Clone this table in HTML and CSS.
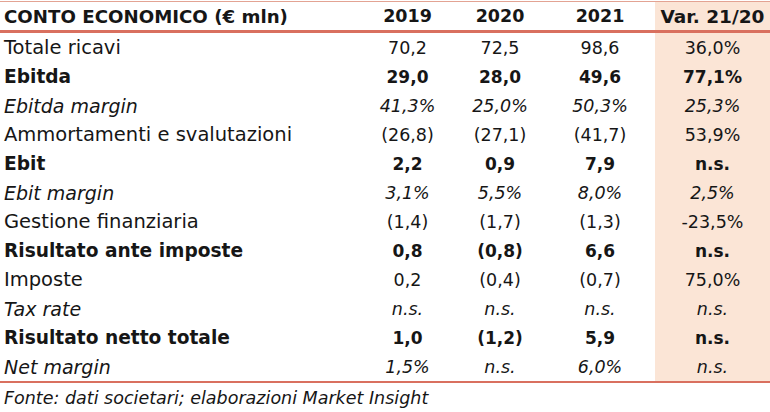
FILE: index.html
```html
<!DOCTYPE html>
<html lang="it">
<head>
<meta charset="utf-8">
<link rel="stylesheet" href="styles.css">
</head>
<body>
<div class="sheet">
  <div class="row head">
    <div class="lab">CONTO ECONOMICO (€ mln)</div>
    <div class="v">2019</div><div class="v">2020</div><div class="v">2021</div><div class="v var">Var. 21/20</div>
  </div>
  <div class="body">
    <div class="row"><div class="lab">Totale ricavi</div><div class="v">70,2</div><div class="v">72,5</div><div class="v">98,6</div><div class="v var">36,0%</div></div>
    <div class="row b"><div class="lab">Ebitda</div><div class="v">29,0</div><div class="v">28,0</div><div class="v">49,6</div><div class="v var">77,1%</div></div>
    <div class="row i"><div class="lab">Ebitda margin</div><div class="v">41,3%</div><div class="v">25,0%</div><div class="v">50,3%</div><div class="v var">25,3%</div></div>
    <div class="row"><div class="lab">Ammortamenti e svalutazioni</div><div class="v">(26,8)</div><div class="v">(27,1)</div><div class="v">(41,7)</div><div class="v var">53,9%</div></div>
    <div class="row b"><div class="lab">Ebit</div><div class="v">2,2</div><div class="v">0,9</div><div class="v">7,9</div><div class="v var">n.s.</div></div>
    <div class="row i"><div class="lab">Ebit margin</div><div class="v">3,1%</div><div class="v">5,5%</div><div class="v">8,0%</div><div class="v var">2,5%</div></div>
    <div class="row"><div class="lab">Gestione finanziaria</div><div class="v">(1,4)</div><div class="v">(1,7)</div><div class="v">(1,3)</div><div class="v var">-23,5%</div></div>
    <div class="row b"><div class="lab">Risultato ante imposte</div><div class="v">0,8</div><div class="v">(0,8)</div><div class="v">6,6</div><div class="v var">n.s.</div></div>
    <div class="row"><div class="lab">Imposte</div><div class="v">0,2</div><div class="v">(0,4)</div><div class="v">(0,7)</div><div class="v var">75,0%</div></div>
    <div class="row i"><div class="lab">Tax rate</div><div class="v">n.s.</div><div class="v">n.s.</div><div class="v">n.s.</div><div class="v var">n.s.</div></div>
    <div class="row b"><div class="lab">Risultato netto totale</div><div class="v">1,0</div><div class="v">(1,2)</div><div class="v">5,9</div><div class="v var">n.s.</div></div>
    <div class="row i"><div class="lab">Net margin</div><div class="v">1,5%</div><div class="v">n.s.</div><div class="v">6,0%</div><div class="v var">n.s.</div></div>
  </div>
  <div class="note">Fonte: dati societari; elaborazioni Market Insight</div>
</div>
</body>
</html>
```
FILE: styles.css
```css
html, body {
  margin: 0;
  padding: 0;
  background: #ffffff;
}
.sheet {
  width: 770px;
  padding-top: 1px;
  font-family: "DejaVu Sans", "Liberation Sans", sans-serif;
  color: #161616;
  font-size: 17.5px;
}
.row {
  display: grid;
  grid-template-columns: 360px 95px 90px 110px 115px;
  height: 29px;
  align-items: stretch;
}
.row > div {
  display: flex;
  align-items: center;
  white-space: nowrap;
}
.lab {
  padding-left: 4px;
  font-size: 19.5px;
}
.v {
  justify-content: center;
}
.var {
  background: #fbe5d6;
}
.head {
  border-top: 1px solid #e3a393;
  border-bottom: 3px solid #d9705f;
  height: 28px;
  font-weight: bold;
}
.head .lab {
  font-size: 18.2px;
}
.head .v {
  font-size: 17.5px;
}
.head .var {
  font-size: 18.5px;
}
.b {
  font-weight: bold;
}
.b .lab {
  font-size: 18.6px;
}
.b .v {
  font-size: 17px;
}
.i {
  font-style: italic;
}
.i .lab {
  font-size: 19px;
}
.body {
  border-bottom: 2px solid #d9705f;
}
.note {
  font-style: italic;
  font-size: 17.5px;
  padding-left: 4px;
  height: 30px;
  display: flex;
  align-items: center;
}
```
